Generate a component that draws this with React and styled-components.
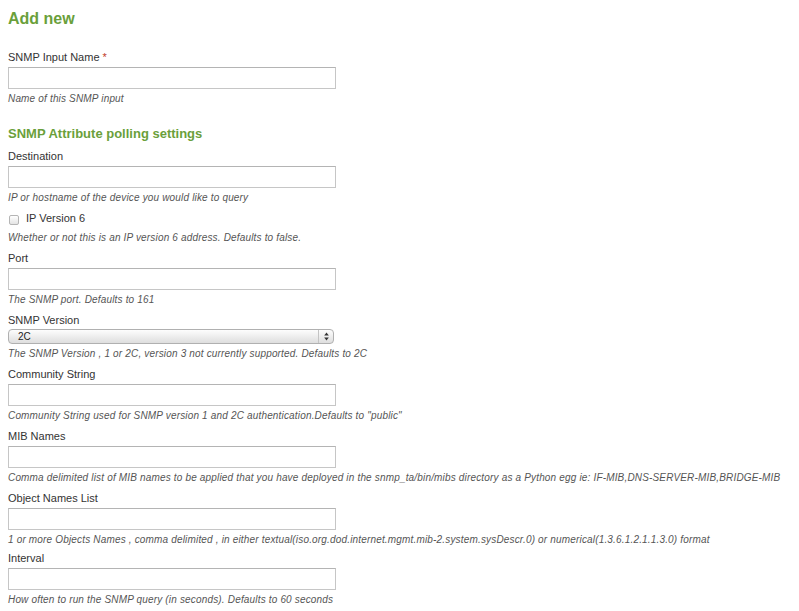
import styled, { createGlobalStyle } from "styled-components";

const GlobalStyle = createGlobalStyle`
  body {
    margin: 0;
    background: #ffffff;
    font-family: "Liberation Sans", Arial, sans-serif;
  }
`;

const Page = styled.main`
  padding: 9px 8px 0 8px;
  color: #333333;
`;

const Title = styled.h1`
  margin: 0 0 22px 0;
  font-size: 16px;
  line-height: 20px;
  font-weight: 700;
  color: #6a9f3b;
`;

const Section = styled.h2`
  margin: 21px 0 8px 0;
  font-size: 13px;
  line-height: 16px;
  font-weight: 700;
  color: #6a9f3b;
`;

const Field = styled.div`
  display: flex;
  flex-direction: column;
  margin-bottom: ${({ $gap }) => ($gap ? `${$gap}px` : "8px")};
`;

const Label = styled.label`
  font-size: 11px;
  line-height: 13px;
  color: #333333;
  margin-bottom: 3px;
`;

const Star = styled.span`
  color: #c0392b;
  margin-left: 3px;
`;

const TextBox = styled.input`
  box-sizing: border-box;
  width: 328px;
  height: 22px;
  margin: 0;
  padding: 2px 4px;
  border: 1px solid #c6c6c6;
  border-top-color: #b4b4b4;
  background: #ffffff;
  outline: none;
  font-family: inherit;
  font-size: 11px;
`;

const Help = styled.p`
  margin: ${({ $top }) => ($top ? `${$top}px` : "4px")} 0 0 0;
  font-size: 10px;
  line-height: 12px;
  font-style: italic;
  color: #555555;
  letter-spacing: 0.17px;
  white-space: nowrap;
`;

const CheckRow = styled.label`
  display: flex;
  align-items: center;
  gap: 7px;
  font-size: 11px;
  line-height: 13px;
  color: #333333;
  padding-left: 1px;
`;

const Box = styled.span`
  display: inline-block;
  width: 8px;
  height: 8px;
  border: 1px solid #b5b5b5;
  border-radius: 2px;
  background: linear-gradient(#ffffff, #e4e4e4);
  margin-top: 2px;
`;

const SelectBox = styled.div`
  box-sizing: border-box;
  width: 326px;
  height: 15px;
  margin-top: -1px;
  display: flex;
  align-items: center;
  border: 1px solid #b0b0b0;
  border-radius: 4px;
  background: linear-gradient(#fdfdfd, #ececec 55%, #dedede);
  font-size: 10px;
  color: #222222;
`;

const SelectText = styled.span`
  flex: 1;
  padding-left: 9px;
`;

const Stepper = styled.span`
  width: 14px;
  height: 100%;
  border-left: 1px solid #c4c4c4;
  display: flex;
  align-items: center;
  justify-content: center;
`;

const fields = [
  {
    label: "Port",
    help: "The SNMP port. Defaults to 161",
  },
];

const moreFields = [
  {
    label: "Community String",
    help: 'Community String used for SNMP version 1 and 2C authentication.Defaults to "public"',
  },
  {
    label: "MIB Names",
    help: "Comma delimited list of MIB names to be applied that you have deployed in the snmp_ta/bin/mibs directory as a Python egg ie: IF-MIB,DNS-SERVER-MIB,BRIDGE-MIB",
  },
  {
    label: "Object Names List",
    help: "1 or more Objects Names , comma delimited , in either textual(iso.org.dod.internet.mgmt.mib-2.system.sysDescr.0) or numerical(1.3.6.1.2.1.1.3.0) format",
    gap: 6,
  },
  {
    label: "Interval",
    help: "How often to run the SNMP query (in seconds). Defaults to 60 seconds",
  },
];

const TextField = ({ label, help, required, gap }) => (
  <Field $gap={gap}>
    <Label>
      {label}
      {required && <Star>*</Star>}
    </Label>
    <TextBox type="text" />
    <Help>{help}</Help>
  </Field>
);

const App = () => {
  return (
    <Page>
      <GlobalStyle />
      <Title>Add new</Title>

      <TextField label="SNMP Input Name" help="Name of this SNMP input" required />

      <Section>SNMP Attribute polling settings</Section>

      <TextField
        label="Destination"
        help="IP or hostname of the device you would like to query"
      />

      <Field>
        <CheckRow>
          <Box />
          IP Version 6
        </CheckRow>
        <Help $top={7}>
          Whether or not this is an IP version 6 address. Defaults to false.
        </Help>
      </Field>

      {fields.map((f) => (
        <TextField key={f.label} label={f.label} help={f.help} />
      ))}

      <Field>
        <Label>SNMP Version</Label>
        <SelectBox>
          <SelectText>2C</SelectText>
          <Stepper>
            <svg width="5" height="9" viewBox="0 0 5 9">
              <path d="M2.5 0.5 L4.8 3.6 L0.2 3.6 Z" fill="#333" />
              <path d="M2.5 8.5 L4.8 5.4 L0.2 5.4 Z" fill="#333" />
            </svg>
          </Stepper>
        </SelectBox>
        <Help>
          The SNMP Version , 1 or 2C, version 3 not currently supported. Defaults to 2C
        </Help>
      </Field>

      {moreFields.map((f) => (
        <TextField key={f.label} label={f.label} help={f.help} gap={f.gap} />
      ))}
    </Page>
  );
};

export default App;
